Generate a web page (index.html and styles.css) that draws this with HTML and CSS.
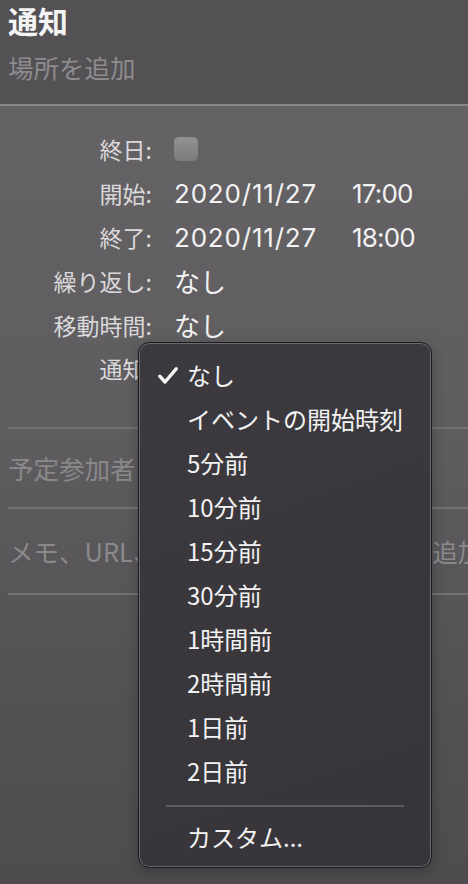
FILE: index.html
```html
<!DOCTYPE html>
<html lang="ja">
<head>
<meta charset="utf-8">
<link rel="stylesheet" href="styles.css">
</head>
<body>
<div class="page">
  <header class="header">
    <h1 class="title">通知</h1>
    <div class="location">場所を追加</div>
  </header>
  <section class="details">
    <div class="grid">
      <div class="label">終日:</div><div class="value"><span class="checkbox"></span></div>
      <div class="label">開始:</div><div class="value num"><span class="date">2020/11/27</span><span class="time">17:00</span></div>
      <div class="label">終了:</div><div class="value num"><span class="date">2020/11/27</span><span class="time">18:00</span></div>
      <div class="label">繰り返し:</div><div class="value">なし</div>
      <div class="label">移動時間:</div><div class="value">なし</div>
      <div class="label">通知:</div><div class="value">なし</div>
    </div>
  </section>
  <div class="field attendees">予定参加者を追加</div>
  <div class="field notes">メモ、URL<span class="wide">、または添付ファイルを</span>追加</div>
  <div class="field-end"></div>

  <div class="menu">
    <div class="item checked"><svg class="check" viewBox="0 0 20 17" width="20" height="17"><path d="M1.8 9.2 L7 15 L18.2 1.8" fill="none" stroke="#f4f4f4" stroke-width="3.4" stroke-linecap="round" stroke-linejoin="round"/></svg>なし</div>
    <div class="item">イベントの開始時刻</div>
    <div class="item">5分前</div>
    <div class="item">10分前</div>
    <div class="item">15分前</div>
    <div class="item">30分前</div>
    <div class="item">1時間前</div>
    <div class="item">2時間前</div>
    <div class="item">1日前</div>
    <div class="item">2日前</div>
    <div class="menu-sep"></div>
    <div class="item">カスタム...</div>
  </div>
</div>
</body>
</html>
```

FILE: styles.css
```css
html, body {
  margin: 0;
  padding: 0;
}
body {
  width: 468px;
  height: 884px;
  overflow: hidden;
  font-family: "Noto Sans CJK JP", "Noto Sans", sans-serif;
  background: linear-gradient(180deg, #666467 0px, #5f5d60 420px, #535154 700px, #4e4c4f 884px);
}
.page {
  position: relative;
  width: 468px;
  height: 884px;
}
.header {
  height: 104px;
  background: #535154;
  border-bottom: 2px solid #8a888b;
  padding: 0 8px;
  box-sizing: content-box;
}
.title {
  margin: 0;
  padding-top: 1px;
  font-size: 30px;
  line-height: 38px;
  font-weight: 700;
  color: #f4f4f4;
}
.location {
  margin-top: 12px;
  font-size: 25.5px;
  line-height: 32px;
  color: #8d8b8e;
}
.details {
  padding: 22px 0 36px;
}
.grid {
  display: grid;
  grid-template-columns: 152px 1fr;
  column-gap: 22px;
  grid-auto-rows: 43.8px;
  align-items: center;
}
.label {
  text-align: right;
  font-size: 23px;
  color: #dad8db;
  white-space: nowrap;
  padding-bottom: 1px;
}
.value {
  font-size: 26px;
  color: #f2f2f2;
  white-space: nowrap;
  display: flex;
  align-items: center;
  padding-bottom: 1px;
}
.num {
  font-family: Inter, "Noto Sans CJK JP", sans-serif;
  font-size: 26px;
  padding-bottom: 0;
}
.date {
  letter-spacing: 0.8px;
}
.time {
  margin-left: 35px;
  letter-spacing: -0.8px;
}
.checkbox {
  display: block;
  width: 24px;
  height: 24px;
  border-radius: 5px;
  background: linear-gradient(180deg, #939194, #7c7a7d);
}
.field {
  margin-left: 8px;
  border-top: 2px solid #737174;
  font-size: 25.5px;
  color: #8b898c;
  white-space: nowrap;
  overflow: hidden;
  display: flex;
  align-items: center;
}
.wide {
  letter-spacing: 1.7px;
}
.attendees {
  height: 78px;
}
.notes {
  height: 84px;
}
.field-end {
  margin-left: 8px;
  border-top: 2px solid #737174;
}
.menu {
  position: absolute;
  left: 138px;
  top: 342px;
  width: 294px;
  height: 526px;
  box-sizing: border-box;
  padding: 12px 0 8px;
  background: linear-gradient(160deg, #3c3a3f, #37353a);
  border-radius: 11px;
  border: 1px solid #1c1b1d;
  box-shadow: inset 0 0 0 1px #6a686c, 0 4px 14px rgba(0,0,0,0.25);
}
.item {
  position: relative;
  height: 44px;
  box-sizing: border-box;
  display: flex;
  align-items: center;
  padding-left: 48px;
  padding-bottom: 6px;
  font-size: 24px;
  color: #f2f2f2;
  white-space: nowrap;
}
.check {
  position: absolute;
  left: 19px;
  top: 12px;
}
.menu-sep {
  height: 2px;
  margin: 10px 27px 10px 27px;
  background: #5d5b5f;
}
```
